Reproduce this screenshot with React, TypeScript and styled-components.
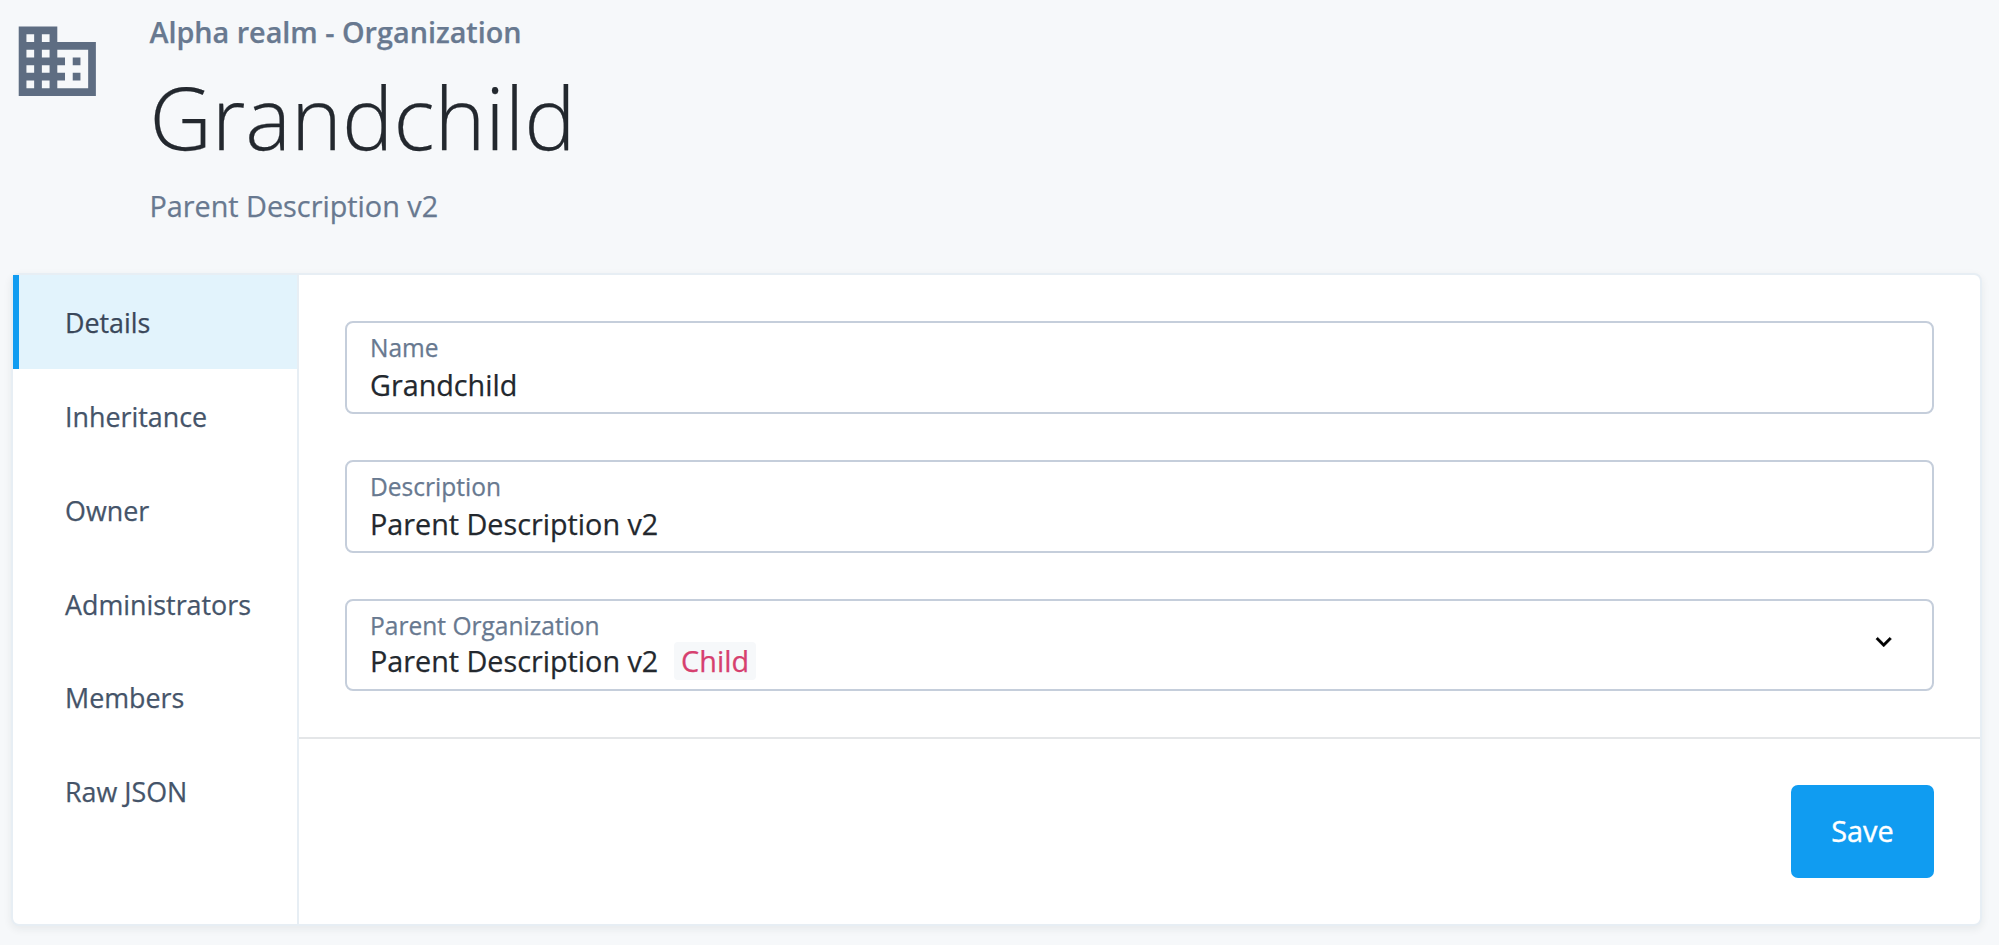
import React from "react";
import styled, { createGlobalStyle } from "styled-components";

const GlobalStyle = createGlobalStyle`
  *, *::before, *::after { box-sizing: border-box; }
  html, body { margin: 0; background: #f6f8fa; }
  body {
    font-family: "Open Sans", "Noto Sans", sans-serif;
    font-size: 28.8px;
    color: #23282e;
    overflow: hidden;
    -webkit-text-stroke: 0.25px currentColor;
  }
`;

const Page = styled.main`
  width: 1999px;
  height: 945px;
  padding: 10px 17px 0 11px;
`;

const Header = styled.header`
  display: flex;
  height: 263px;
`;

const BuildingIcon = styled.svg`
  width: 92.6px;
  height: 92.6px;
  margin: 4.8px 45.4px 0 0.4px;
  fill: #5e6d82;
`;

const Realm = styled.div`
  line-height: 44px;
  font-weight: 600;
  font-size: 28.75px;
  color: #687990;
`;

const Title = styled.h1`
  margin: 0;
  line-height: 126px;
  font-size: 86.3px;
  font-weight: 300;
`;

const Subtitle = styled.div`
  line-height: 52px;
  color: #687990;
`;

const Card = styled.section`
  display: flex;
  height: 653px;
  background: #fff;
  border: 2px solid #e7eef4;
  border-radius: 8px;
  box-shadow: 0 3px 8px rgba(35, 40, 46, 0.07);
`;

const Nav = styled.nav`
  width: 286px;
  border-right: 2px solid #e7eef4;
`;

const NavItem = styled.a<{ $active?: boolean }>`
  display: block;
  height: 93.87px;
  line-height: 95.6px;
  padding-left: 46px;
  border-left: 6.5px solid ${(p) => (p.$active ? "#109cf1" : "transparent")};
  background: ${(p) => (p.$active ? "#e2f3fc" : "transparent")};
  color: ${(p) => (p.$active ? "#3a475a" : "#455469")};
  font-size: 26.85px;
`;

const Content = styled.div`
  flex: 1;
  display: flex;
  flex-direction: column;
`;

const Form = styled.div`
  display: flex;
  flex-direction: column;
  gap: 46px;
  height: 464px;
  padding: 46px 46px 0;
  border-bottom: 2px solid #e4e6e8;
`;

const Field = styled.div<{ $select?: boolean }>`
  display: flex;
  justify-content: space-between;
  height: ${(p) => (p.$select ? 92 : 93)}px;
  padding: 7px 32.7px 0 23px;
  border: 2px solid #c5cedb;
  border-radius: 8px;
`;

const Label = styled.div`
  line-height: 36px;
  font-size: 24.55px;
  color: #687990;
`;

const Value = styled.div<{ $tight?: boolean }>`
  display: flex;
  align-items: center;
  height: 38px;
  margin-top: ${(p) => (p.$tight ? -2.5 : 0)}px;
  font-size: 28.75px;
  line-height: 38px;
  white-space: pre;
`;

const Chip = styled.code`
  margin-left: 15.8px;
  padding: 0 7px;
  line-height: 38px;
  font-family: inherit;
  font-size: 28.8px;
  border-radius: 4px;
  background: #f6f8fa;
  color: #d6406f;
`;

const Chevron = styled.svg`
  width: 31.4px;
  height: 31.4px;
  margin-top: 18px;
  fill: #000;
  stroke: #000;
  stroke-width: 0.3px;
`;

const Footer = styled.footer`
  display: flex;
  justify-content: flex-end;
  padding: 46px;
`;

const SaveButton = styled.button`
  width: 143px;
  height: 93px;
  padding: 0 0 2px;
  border: 0;
  border-radius: 7px;
  background: #109cf1;
  color: #fff;
  font: inherit;
  -webkit-text-stroke: 0.4px currentColor;
`;

const sections = ["Details", "Inheritance", "Owner", "Administrators", "Members", "Raw JSON"];

export default function App() {
  return (
    <Page>
      <GlobalStyle />
      <Header>
        <BuildingIcon viewBox="0 0 24 24" aria-hidden="true">
          <path d="M12 7V3H2v18h20V7H12zM6 19H4v-2h2v2zm0-4H4v-2h2v2zm0-4H4V9h2v2zm0-4H4V5h2v2zm4 12H8v-2h2v2zm0-4H8v-2h2v2zm0-4H8V9h2v2zm0-4H8V5h2v2zm10 12h-8v-2h2v-2h-2v-2h2v-2h-2V9h8v10zm-2-8h-2v2h2v-2zm0 4h-2v2h2v-2z" />
        </BuildingIcon>
        <div>
          <Realm>Alpha realm - Organization</Realm>
          <Title>Grandchild</Title>
          <Subtitle>Parent Description v2</Subtitle>
        </div>
      </Header>
      <Card>
        <Nav>
          {sections.map((name, i) => (
            <NavItem key={name} $active={i === 0}>{name}</NavItem>
          ))}
        </Nav>
        <Content>
          <Form>
            <Field>
              <div>
                <Label>Name</Label>
                <Value>Grandchild</Value>
              </div>
            </Field>
            <Field>
              <div>
                <Label>Description</Label>
                <Value>Parent Description v2</Value>
              </div>
            </Field>
            <Field $select>
              <div>
                <Label>Parent Organization</Label>
                <Value $tight>
                  Parent Description v2<Chip>Child</Chip>
                </Value>
              </div>
              <Chevron viewBox="0 0 24 24" aria-hidden="true">
                <path d="M7.41 8.59 12 13.17l4.59-4.58L18 10l-6 6-6-6z" />
              </Chevron>
            </Field>
          </Form>
          <Footer>
            <SaveButton type="button">Save</SaveButton>
          </Footer>
        </Content>
      </Card>
    </Page>
  );
}
